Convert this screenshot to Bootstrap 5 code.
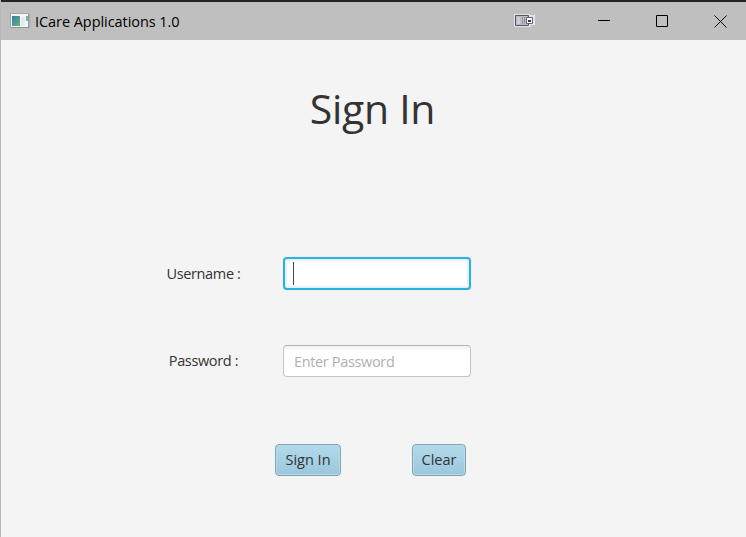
<!DOCTYPE html>
<html lang="en">
<head>
<meta charset="utf-8">
<meta name="viewport" content="width=device-width, initial-scale=1">
<title>ICare Applications 1.0</title>
<link href="https://cdn.jsdelivr.net/npm/bootstrap@5.3.0/dist/css/bootstrap.min.css" rel="stylesheet">
<style>
  body { font-family: "Open Sans", "Noto Sans", sans-serif; font-size: 14.5px; line-height: 20px; color: #333; background: #f4f4f4; }
  .app-window { height: 537px; border-left: 1px solid #b9b9b9; }
  .title-bar { height: 40px; margin-left: -1px; padding: 0 18px 0 10px; background: #bfbfbf; border-top: 2px solid #262323; color: #000; }
  .app-title { margin-left: 5px; padding-top: 1px; font-size: 14.5px; letter-spacing: -.06px; }
  .dock-icon { margin-right: 62px; }
  .win-controls { gap: 45px; padding-right: 1px; }
  .heading { margin-top: 41px; font-size: 41px; line-height: 54px; font-weight: 400; letter-spacing: -.3px; padding-right: 2px; }
  .sign-form { margin-top: 122px; padding-left: 160px; }
  .field-row { height: 33px; margin-bottom: 54px; }
  .field-label { width: 85px; letter-spacing: -.35px; }
  .form-control.field { width: 188px; height: 32px; margin-left: 37px; padding: 2px 10px 0; font-size: 14.5px; line-height: 20px; letter-spacing: -.35px; border: 1px solid #c4c4c4; border-top-color: #b2b2b2; border-radius: 4px; background: linear-gradient(#f1f1f1, #fff 5px); color: #333; }
  .form-control.field::placeholder { color: #b0b0b0; opacity: 1; }
  .form-control.field.active-field { height: 33px; padding: 4px 8px; border: 2px solid #2fb0db; background: #fff; box-shadow: inset 0 0 0 2px #e0f4fb, 0 0 1px #9bd9ee; }
  .caret { width: 1px; height: 23px; background: #444; }
  .action-row { margin-left: 114px; margin-top: 67px; gap: 71px; }
  .btn.action { height: 32px; padding: 0; font-size: 14.5px; line-height: 20px; letter-spacing: 0; color: #333; border: 1px solid #7fa5b3; border-radius: 4px; background: linear-gradient(#b1dbeb, #9cc6dc); box-shadow: inset 0 0 0 1px #b4dcea; }
  .btn-sign { width: 66px; }
  .btn-clear { width: 54px; }
</style>
</head>
<body>
<main class="app-window overflow-hidden">
  <header class="title-bar d-flex align-items-center">
    <svg width="20" height="16" viewBox="0 0 20 16" aria-hidden="true">
      <defs><linearGradient id="screen" x1="0" y1="0" x2="1" y2="1"><stop stop-color="#3977a7"/><stop offset="1" stop-color="#65b879"/></linearGradient></defs>
      <path d="M.5.5h18v14H.5z" fill="#f4f5f5" stroke="#a3a6a9"/>
      <path d="M1 14.500h18V1" fill="none" stroke="#8c8f93"/>
      <path d="M2 3h8v10H2z" fill="url(#screen)"/>
      <path d="M11 4h4v9h-4z" fill="#e6eaeb"/>
      <path d="M16 3h2v5h-2z" fill="#71b990"/>
    </svg>
    <span class="app-title">ICare Applications 1.0</span>
    <svg class="dock-icon ms-auto" width="22" height="16" viewBox="0 0 22 16" aria-hidden="true">
      <path d="M0 1h16v1h5v10h-4v2H0z" fill="#e4e4e7"/>
      <path d="M1.500 2.500h13v10h-13z" fill="#b9bbc2" stroke="#535568"/>
      <path d="M3 4h3v7H3z" fill="#cdced2"/>
      <path d="M8.500 4v7M10.500 4v7" stroke="#93949c"/>
      <path d="M12.500 4.500h6v6h-6z" fill="#fff" stroke="#626579"/>
      <path d="M14 8h3" stroke="#30334a" stroke-width="2"/>
    </svg>
    <div class="win-controls d-flex align-items-center">
      <svg width="13" height="13" viewBox="0 0 13 13" stroke="#000" fill="none"><path d="M0 5.500h12"/></svg>
      <svg width="13" height="13" viewBox="0 0 13 13" stroke="#000" fill="none"><path d="M.5.5h11v11H.5z"/></svg>
      <svg width="13" height="13" viewBox="0 0 13 13" stroke="#000" fill="none"><path d="M.5.5l12 12M12.500.5l-12 12"/></svg>
    </div>
  </header>

  <h1 class="heading text-center mb-0">Sign In</h1>

  <form class="sign-form">
    <div class="field-row d-flex align-items-center">
      <label class="field-label text-center">Username :</label>
      <div class="form-control field active-field d-flex align-items-center" role="textbox" aria-label="Username"><span class="caret"></span></div>
    </div>
    <div class="field-row d-flex align-items-center">
      <label class="field-label text-center" for="password">Password :</label>
      <input class="form-control field" id="password" type="password" placeholder="Enter Password">
    </div>
    <div class="action-row d-flex">
      <button class="btn action btn-sign" type="button">Sign In</button>
      <button class="btn action btn-clear" type="button">Clear</button>
    </div>
  </form>
</main>
<script src="https://cdn.jsdelivr.net/npm/bootstrap@5.3.0/dist/js/bootstrap.bundle.min.js"></script>
</body>
</html>
